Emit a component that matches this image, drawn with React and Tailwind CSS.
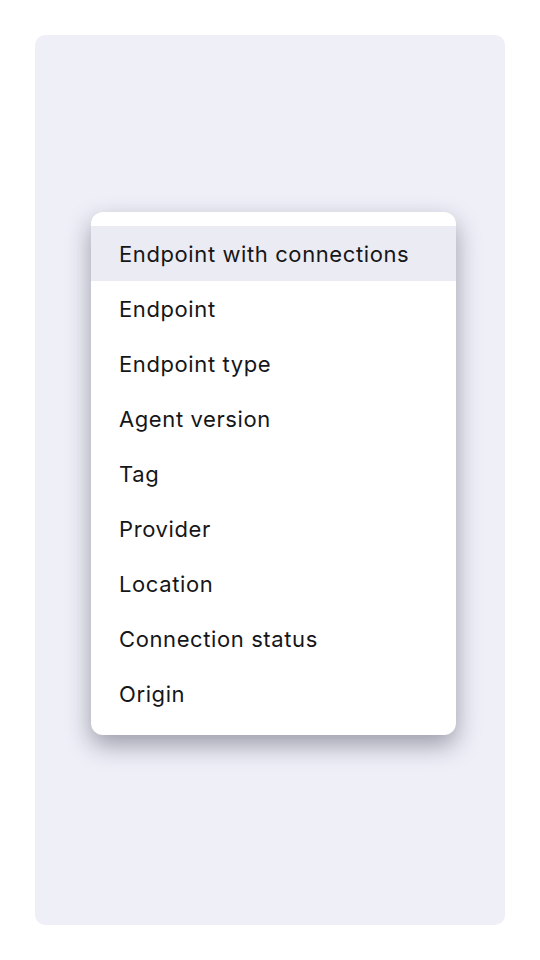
export default function App() {
  const items = [
    "Endpoint with connections",
    "Endpoint",
    "Endpoint type",
    "Agent version",
    "Tag",
    "Provider",
    "Location",
    "Connection status",
    "Origin",
  ];
  return (
    <div className="w-[540px] h-[960px] bg-white p-[35px]" style={{ fontFamily: "Inter, 'Noto Sans', sans-serif" }}>
      <div className="w-[470px] h-[890px] bg-[#efeff8] rounded-[10px] flex flex-col items-start pt-[177px] pl-[56px]">
        <div className="w-[365px] bg-white rounded-[12px] py-[14px] shadow-[0_10px_24px_rgba(30,30,50,0.4)]">
          {items.map((t, i) => (
            <div
              key={t}
              className={`h-[55px] flex items-center pl-[28px] pt-[2px] text-[22px] tracking-[0.6px] text-[#161618] ${i === 0 ? "bg-[#ebebf3]" : ""}`}
            >
              {t}
            </div>
          ))}
        </div>
      </div>
    </div>
  );
}
